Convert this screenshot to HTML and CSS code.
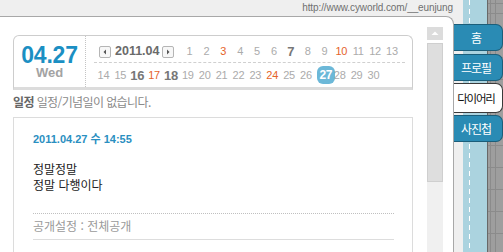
FILE: index.html
```html
<!DOCTYPE html>
<html lang="ko">
<head>
<meta charset="utf-8">
<link rel="stylesheet" href="styles.css">
</head>
<body>
<div class="page">
  <div class="main">
    <div class="topbar">http://www.cyworld.com/__eunjung</div>
    <div class="panel">
      <div class="content">
        <div class="cal">
          <div class="today">
            <div class="md">04.27</div>
            <div class="dow">Wed</div>
          </div>
          <div class="month">
            <div class="row r1">
              <div class="nav">
                <span class="arr"><svg width="10" height="10" viewBox="0 0 10 10"><polygon points="6,2.5 6,7.5 3.5,5" fill="#555"/></svg></span>
                <span class="ym">2011.04</span>
                <span class="arr"><svg width="10" height="10" viewBox="0 0 10 10"><polygon points="4,2.5 4,7.5 6.5,5" fill="#555"/></svg></span>
              </div>
              <span class="d">1</span><span class="d">2</span><span class="d sun">3</span><span class="d">4</span><span class="d">5</span><span class="d">6</span><span class="d b">7</span><span class="d">8</span><span class="d">9</span><span class="d sun">10</span><span class="d">11</span><span class="d">12</span><span class="d">13</span>
            </div>
            <div class="row r2">
              <span class="d">14</span><span class="d">15</span><span class="d b">16</span><span class="d sun">17</span><span class="d b">18</span><span class="d">19</span><span class="d">20</span><span class="d">21</span><span class="d">22</span><span class="d">23</span><span class="d sun">24</span><span class="d">25</span><span class="d">26</span><span class="d cur"><span class="hl">27</span></span><span class="d">28</span><span class="d">29</span><span class="d">30</span>
            </div>
          </div>
        </div>
        <div class="sched"><b>일정</b> 일정/기념일이 없습니다.</div>
        <div class="entry">
          <div class="edate">2011.04.27 수 14:55</div>
          <div class="etext">정말정말<br>정말 다행이다</div>
          <div class="eopen">공개설정 : 전체공개</div>
        </div>
      </div>
      <div class="scroll">
        <div class="up"><svg width="16" height="13" viewBox="0 0 16 13"><polygon points="4.5,8 11.5,8 8,4.5" fill="#fff"/></svg></div>
        <div class="thumb"></div>
        <div class="track"></div>
      </div>
    </div>
  </div>
  <div class="side">
    <div class="tab t1">홈</div>
    <div class="tab t2">프로필</div>
    <div class="tab t3 active">다이어리</div>
    <div class="tab t4">사진첩</div>
  </div>
</div>
</body>
</html>
```

FILE: styles.css
```css
html, body {
  margin: 0;
  padding: 0;
}
body {
  width: 503px;
  height: 252px;
  overflow: hidden;
  font-family: "Liberation Sans", "Noto Sans CJK KR", sans-serif;
  background: #eee;
}
.page {
  display: flex;
  height: 252px;
}
.main {
  width: 454px;
  flex: none;
  background: #efefef;
  display: flex;
  flex-direction: column;
}
.topbar {
  height: 16px;
  line-height: 16px;
  font-size: 10px;
  color: #6f6f6f;
  text-align: right;
  padding-right: 1px;
  letter-spacing: -0.1px;
}
.panel {
  flex: 1;
  min-height: 0;
  background: #fff;
  border-top: 1px solid #a8a8a8;
  border-right: 1px solid #a8a8a8;
  border-top-right-radius: 8px;
  display: flex;
}
.content {
  width: 426px;
  flex: none;
  padding-top: 18px;
  box-sizing: border-box;
  display: flex;
  flex-direction: column;
  overflow: hidden;
}
.cal {
  margin-left: 13px;
  width: 400px;
  height: 55px;
  box-sizing: border-box;
  border: 1px solid #cdcdcd;
  border-bottom: 3px solid #dcdcdc;
  border-radius: 6px 6px 0 0;
  display: flex;
  flex: none;
}
.today {
  width: 72px;
  flex: none;
  border-right: 1px dotted #c4c4c4;
  display: flex;
  flex-direction: column;
  align-items: center;
  padding-top: 9px;
  box-sizing: border-box;
}
.md {
  font-size: 23px;
  line-height: 21px;
  font-weight: bold;
  color: #1b8fc3;
  letter-spacing: -0.2px;
}
.dow {
  font-size: 13px;
  line-height: 13px;
  font-weight: bold;
  color: #a3a3a3;
}
.month {
  flex: 1;
  padding-left: 9px;
  padding-right: 7px;
}
.row {
  display: flex;
  align-items: center;
}
.r1 {
  margin-top: 9px;
  height: 13px;
  padding-bottom: 4px;
  border-bottom: 1px dashed #d0d0d0;
  margin-left: -1px;
  padding-left: 1px;
}
.r2 {
  height: 24px;
}
.nav {
  width: 86px;
  flex: none;
  display: flex;
  align-items: center;
  padding-left: 4px;
  box-sizing: border-box;
}
.arr {
  width: 12px;
  height: 12px;
  box-sizing: border-box;
  border: 1px solid #b5b5b5;
  border-radius: 2px;
  background: #f7f7f7;
  display: flex;
  flex: none;
}
.ym {
  font-size: 12.5px;
  font-weight: bold;
  color: #6a6a6a;
  width: 44px;
  margin: 0 3px 0 4px;
  white-space: nowrap;
  line-height: 13px;
}
.d {
  width: 16.875px;
  flex: none;
  text-align: center;
  font-size: 11px;
  line-height: 13px;
  color: #ababab;
  letter-spacing: -0.3px;
}
.d.sun {
  color: #e5632b;
}
.d.b {
  font-size: 13px;
  font-weight: bold;
  color: #777;
}
.d.cur {
  display: flex;
  justify-content: center;
  padding-left: 6px;
  box-sizing: border-box;
}
.hl {
  display: flex;
  align-items: center;
  justify-content: center;
  flex: none;
  width: 18px;
  height: 18px;
  border-radius: 6px;
  background: #6cb8d8;
  color: #fff;
  font-weight: bold;
  font-size: 12px;
}
.sched {
  margin: 4px 0 0 13px;
  font-family: "Noto Sans CJK KR", sans-serif;
  font-size: 12px;
  line-height: 16px;
  color: #8a8a8a;
  letter-spacing: -0.6px;
}
.sched b {
  color: #666;
}
.entry {
  margin: 7px 0 0 13px;
  width: 400px;
  flex: 1;
  box-sizing: border-box;
  border: 1px solid #dcdcdc;
  border-bottom: none;
  padding: 15px 18px 0 19px;
}
.edate {
  font-size: 11px;
  line-height: 13px;
  font-weight: bold;
  color: #2a8fc1;
  font-family: "Liberation Sans", "Noto Sans CJK KR", sans-serif;
}
.etext {
  margin-top: 15px;
  font-family: "Noto Sans CJK KR", sans-serif;
  font-size: 12px;
  line-height: 16px;
  color: #222;
}
.eopen {
  margin-top: 20px;
  border-top: 1px dotted #c0c0c0;
  border-bottom: 1px solid #dddddd;
  padding: 4px 0 5px;
  font-family: "Noto Sans CJK KR", sans-serif;
  font-size: 12px;
  line-height: 16px;
  color: #9a9a9a;
}
.scroll {
  width: 16px;
  flex: none;
  margin: 10px 0 0 1px;
  display: flex;
  flex-direction: column;
}
.up {
  height: 13px;
  background: #dcdcdc;
  display: flex;
}
.thumb {
  margin-top: 3px;
  height: 139px;
  box-sizing: border-box;
  background: #dedede;
  border: 1px solid #cfcfcf;
}
.track {
  flex: 1;
  background: #f0f0f0;
}
.side {
  width: 49px;
  flex: none;
  padding-top: 24px;
  box-sizing: border-box;
  display: flex;
  flex-direction: column;
  background:
    repeating-linear-gradient(to bottom, #fff 0 5px, transparent 5px 9px) 15px 0 / 1px 100% no-repeat,
    linear-gradient(to right, #efefef 0 9px, #abd3df 9px 33px, #686868 33px 34px, transparent 34px),
    repeating-linear-gradient(to right, #8b8b8b 0 1px, transparent 1px 22px) 41px 0,
    repeating-linear-gradient(to bottom, #8b8b8b 0 1px, transparent 1px 22px) 0 13px,
    #9e9e9e;
}
.tab {
  height: 27px;
  box-sizing: border-box;
  background: #2a8bb4;
  border: 1px solid #1b5e7a;
  border-left: none;
  border-radius: 0 7px 7px 0;
  color: #fff;
  font-family: "Noto Sans CJK KR", sans-serif;
  font-size: 12px;
  letter-spacing: -1px;
  display: flex;
  align-items: center;
  justify-content: center;
  padding-right: 4px;
}
.t2 {
  margin-top: 3px;
}
.t3 {
  margin-top: 2px;
  height: 30px;
}
.t4 {
  margin-top: 2px;
}
.tab.active {
  background: #fff;
  color: #111;
  border-color: #3a3a3a;
  font-size: 11.5px;
  letter-spacing: -1.2px;
}
```
